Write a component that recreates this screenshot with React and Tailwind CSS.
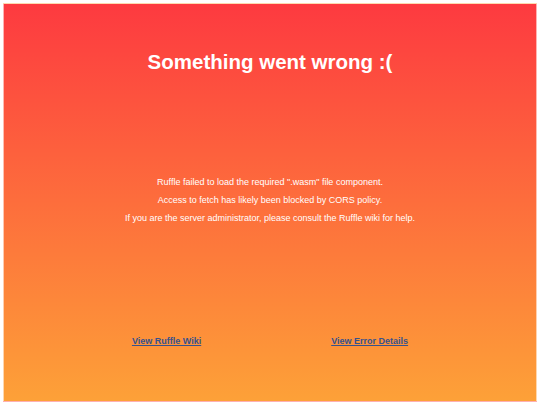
export default function App() {
  return (
    <div className="w-[540px] h-[405px] bg-white p-[3px] font-['Liberation_Sans',Arial,sans-serif]">
      <div className="w-full h-full border border-white/60 bg-[linear-gradient(180deg,#fd3a40_0%,#fda138_100%)] text-white flex flex-col items-center text-center">
        <h1 className="mt-[44px] text-[20.5px] leading-[28px] font-bold">Something went wrong :(</h1>
        <div className="mt-[101px] flex flex-col gap-[7px] text-[9px] leading-[11px]">
          <p>Ruffle failed to load the required ".wasm" file component.</p>
          <p>Access to fetch has likely been blocked by CORS policy.</p>
          <p>If you are the server administrator, please consult the Ruffle wiki for help.</p>
        </div>
        <div className="mt-[112px] flex justify-center gap-[130px] text-[9px] leading-[11px] font-bold">
          <a href="#" className="text-[#37528c] underline">View Ruffle Wiki</a>
          <a href="#" className="text-[#37528c] underline">View Error Details</a>
        </div>
      </div>
    </div>
  );
}
